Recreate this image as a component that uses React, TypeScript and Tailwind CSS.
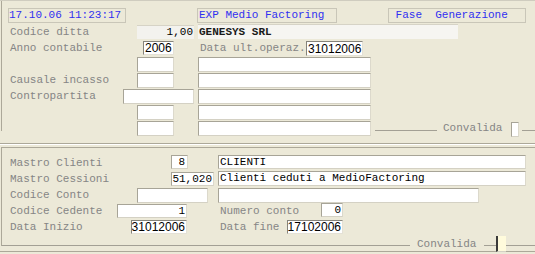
import type { ReactNode } from 'react';

const mono = "font-['Liberation_Mono','Courier_New',monospace]";
const sans = "font-['Liberation_Sans',Arial,sans-serif]";

function Label({ className, children }: { className: string; children: ReactNode }) {
  return <span className={`${className} leading-[16px] text-[#858585] whitespace-pre shrink-0`}>{children}</span>;
}

function Box({ className, children, dark }: { className: string; children?: ReactNode; dark?: boolean }) {
  return (
    <div
      className={`${className} shrink-0 bg-white border flex items-center overflow-hidden whitespace-pre text-black ${
        dark
          ? 'border-t-[#85837a] border-l-[#85837a] border-r-[#e4e1d6] border-b-[#e4e1d6]'
          : 'border-t-[#a7a497] border-l-[#a7a497] border-r-[#dcd9cc] border-b-[#d4d1c4]'
      }`}
    >
      {children}
    </div>
  );
}

function HeaderBox({ className, children }: { className: string; children: ReactNode }) {
  return (
    <div className={`${className} h-[15px] shrink-0 border border-[#c9c6b8] flex items-center text-[#3030f0] whitespace-pre leading-[13px]`}>
      {children}
    </div>
  );
}

function Line({ className }: { className: string }) {
  return <div className={`${className} h-px bg-[#a3a095] shrink-0`} />;
}

export default function App() {
  return (
    <div className={`w-[535px] h-[254px] bg-[#ece9d8] overflow-hidden border-t border-[#cfccbf] ${mono} text-[11px]`}>
      {/* testata e parametri */}
      <div className="ml-px h-[130px] border-l border-[#aca899] pt-[7px]">
        <div className="flex h-[16px] items-start">
          <HeaderBox className="ml-[6px] w-[118px]">17.10.06 11:23:17</HeaderBox>
          <HeaderBox className="ml-[71px] w-[140px] pl-px">EXP Medio Factoring</HeaderBox>
          <HeaderBox className="ml-[51px] w-[138px]"> Fase  Generazione</HeaderBox>
        </div>

        <div className="flex h-[16px] items-start">
          <Label className="ml-[8px] w-[127px]">Codice ditta</Label>
          <div className="mt-px h-[14px] w-[57px] shrink-0 bg-[#f3f2ee] border-t border-[#d6d3c6] flex items-center justify-end pr-px text-black">1,00</div>
          <div className="ml-[4px] h-[15px] w-[260px] shrink-0 bg-[#f6f5f1] border-t border-[#d6d3c6] flex items-center pl-px font-bold text-[#1a1a1a]">GENESYS SRL</div>
        </div>

        <div className="flex h-[16px] items-start">
          <Label className="ml-[8px] w-[133px]">Anno contabile</Label>
          <Box dark className={`mt-px h-[14px] w-[31px] ${sans} text-[12px] pl-px`}>2006</Box>
          <Label className="ml-[26px] w-[106px]">Data ult.operaz.</Label>
          <Box dark className={`mt-px h-[15px] w-[57px] ${sans} text-[12px] pl-px`}>31012006</Box>
        </div>

        <div className="flex h-[16px] items-start">
          <Box className="ml-[135px] mt-px h-[15px] w-[37px]" />
          <Box className="ml-[24px] mt-px h-[15px] w-[173px]" />
        </div>

        <div className="flex h-[16px] items-start">
          <Label className="ml-[8px] w-[127px]">Causale incasso</Label>
          <Box className="mt-px h-[15px] w-[37px]" />
          <Box className="ml-[24px] mt-px h-[15px] w-[173px]" />
        </div>

        <div className="flex h-[16px] items-start">
          <Label className="ml-[8px] w-[113px]">Contropartita</Label>
          <Box className="mt-px h-[15px] w-[71px]" />
          <Box className="ml-[4px] mt-px h-[15px] w-[173px]" />
        </div>

        <div className="flex h-[16px] items-start">
          <Box className="ml-[135px] mt-px h-[15px] w-[37px]" />
          <Box className="ml-[24px] mt-px h-[15px] w-[173px]" />
        </div>

        <div className="flex h-[16px] items-start">
          <Box className="ml-[135px] mt-px h-[15px] w-[37px]" />
          <Box className="ml-[24px] mt-px h-[15px] w-[173px]" />
          <Line className="ml-[4px] mt-[10px] w-[62px]" />
          <Label className="ml-[6px] w-[60px]">Convalida</Label>
          <Box className="ml-[8px] mt-[2px] h-[15px] w-[8px]" />
          <div className="ml-[3px] mt-[10px] h-px flex-1 bg-[#a3a095]" />
        </div>
      </div>

      {/* separatore */}
      <div className="mt-[12px] h-px bg-[#aca899]" />
      <div className="h-px bg-white" />

      {/* mastri e cedente */}
      <div className="mt-[2px] ml-px border-l border-t border-[#aca899] pt-[7px]">
        <div className="flex h-[16px] items-start">
          <Label className="ml-[8px] w-[161px]">Mastro Clienti</Label>
          <Box className="h-[14px] w-[17px] justify-end pr-[2px]">8</Box>
          <Box className="ml-[30px] h-[14px] w-[308px] pl-px">CLIENTI</Box>
        </div>

        <div className="flex h-[16px] items-start">
          <Label className="ml-[8px] w-[161px]">Mastro Cessioni</Label>
          <Box className="mt-px h-[14px] w-[43px] justify-end pr-px">51,020</Box>
          <Box className="ml-[4px] h-[15px] w-[308px] pl-px">Clienti ceduti a MedioFactoring</Box>
        </div>

        <div className="flex h-[16px] items-start">
          <Label className="ml-[8px] w-[127px]">Codice Conto</Label>
          <Box className="mt-px h-[15px] w-[71px]" />
          <Box className="ml-[10px] mt-px h-[15px] w-[261px]" />
        </div>

        <div className="flex h-[16px] items-start">
          <Label className="ml-[8px] w-[107px]">Codice Cedente</Label>
          <Box className="mt-px h-[14px] w-[70px] justify-end pr-px">1</Box>
          <Label className="ml-[33px] w-[101px]">Numero conto</Label>
          <Box className="h-[14px] w-[22px] justify-end pr-px">0</Box>
        </div>

        <div className="flex h-[16px] items-start">
          <Label className="ml-[8px] w-[121px]">Data Inizio</Label>
          <Box dark className={`mt-px h-[14px] w-[56px] ${sans} text-[12px] justify-end pr-px`}>31012006</Box>
          <Label className="ml-[33px] w-[67px]">Data fine</Label>
          <Box dark className={`mt-px h-[14px] w-[56px] ${sans} text-[12px] justify-end pr-px`}>17102006</Box>
        </div>

        <div className="flex h-[11px] items-start">
          <Line className="mt-[10px] w-[408px]" />
          <Label className="ml-[7px] mt-[1px] w-[60px]">Convalida</Label>
          <Line className="ml-[7px] mt-[10px] w-[12px]" />
          <div className="mt-px h-[16px] w-[10px] shrink-0 bg-[#fffbdc] border-l-2 border-[#3a3a3a] border-b border-b-[#d4d1c4]" />
          <div className="mt-[10px] h-px flex-1 bg-[#a3a095]" />
        </div>
      </div>

      <div className="mt-[5px] h-px bg-[#aca899]" />
    </div>
  );
}
